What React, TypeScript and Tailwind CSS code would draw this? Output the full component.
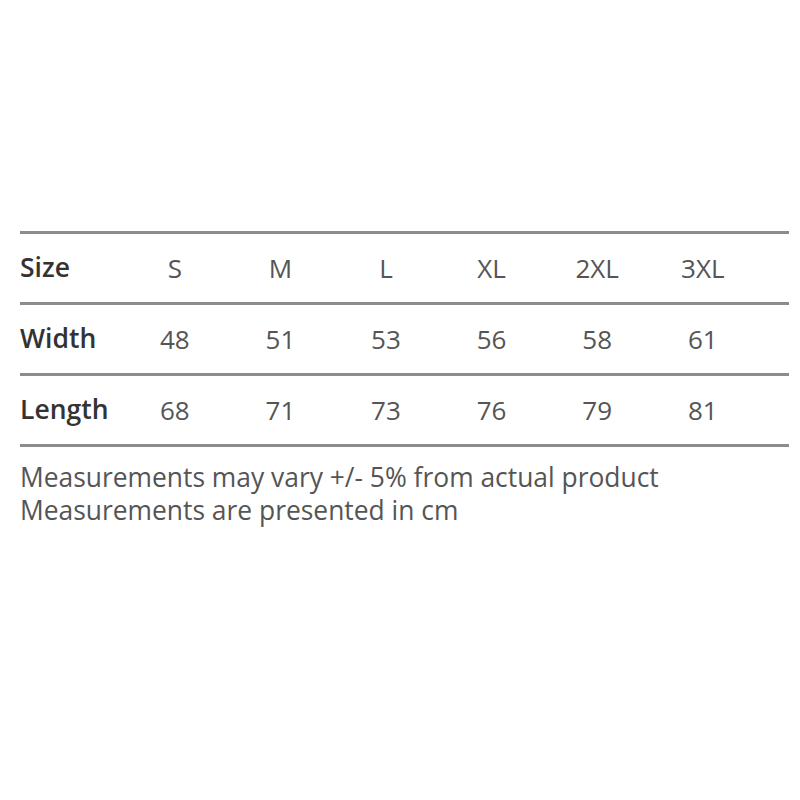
const sizes = ['S', 'M', 'L', 'XL', '2XL', '3XL']

const rows = [
  { label: 'Size', values: sizes },
  { label: 'Width', values: ['48', '51', '53', '56', '58', '61'] },
  { label: 'Length', values: ['68', '71', '73', '76', '79', '81'] },
]

export default function App() {
  return (
    <div
      className="w-[800px] h-[800px] bg-white pt-[231px] pl-[20px] pr-[11px]"
      style={{ fontFamily: "'Open Sans', sans-serif" }}
    >
      <div className="border-t-[3px] border-[#8c8c8c]">
        {rows.map((row) => (
          <div
            key={row.label}
            className="flex items-center h-[71px] border-b-[3px] border-[#8c8c8c]"
          >
            <div className="w-[102px] text-[26.5px] font-semibold text-[#333333]">{row.label}</div>
            {row.values.map((v) => (
              <div key={v} className="w-[105.6px] text-center text-[26px] text-[#555555]">
                {v}
              </div>
            ))}
          </div>
        ))}
      </div>
      <div className="mt-[14px] text-[26.4px] leading-[33px] text-[#555555]">
        <p>Measurements may vary +/- 5% from actual product</p>
        <p>Measurements are presented in cm</p>
      </div>
    </div>
  )
}
